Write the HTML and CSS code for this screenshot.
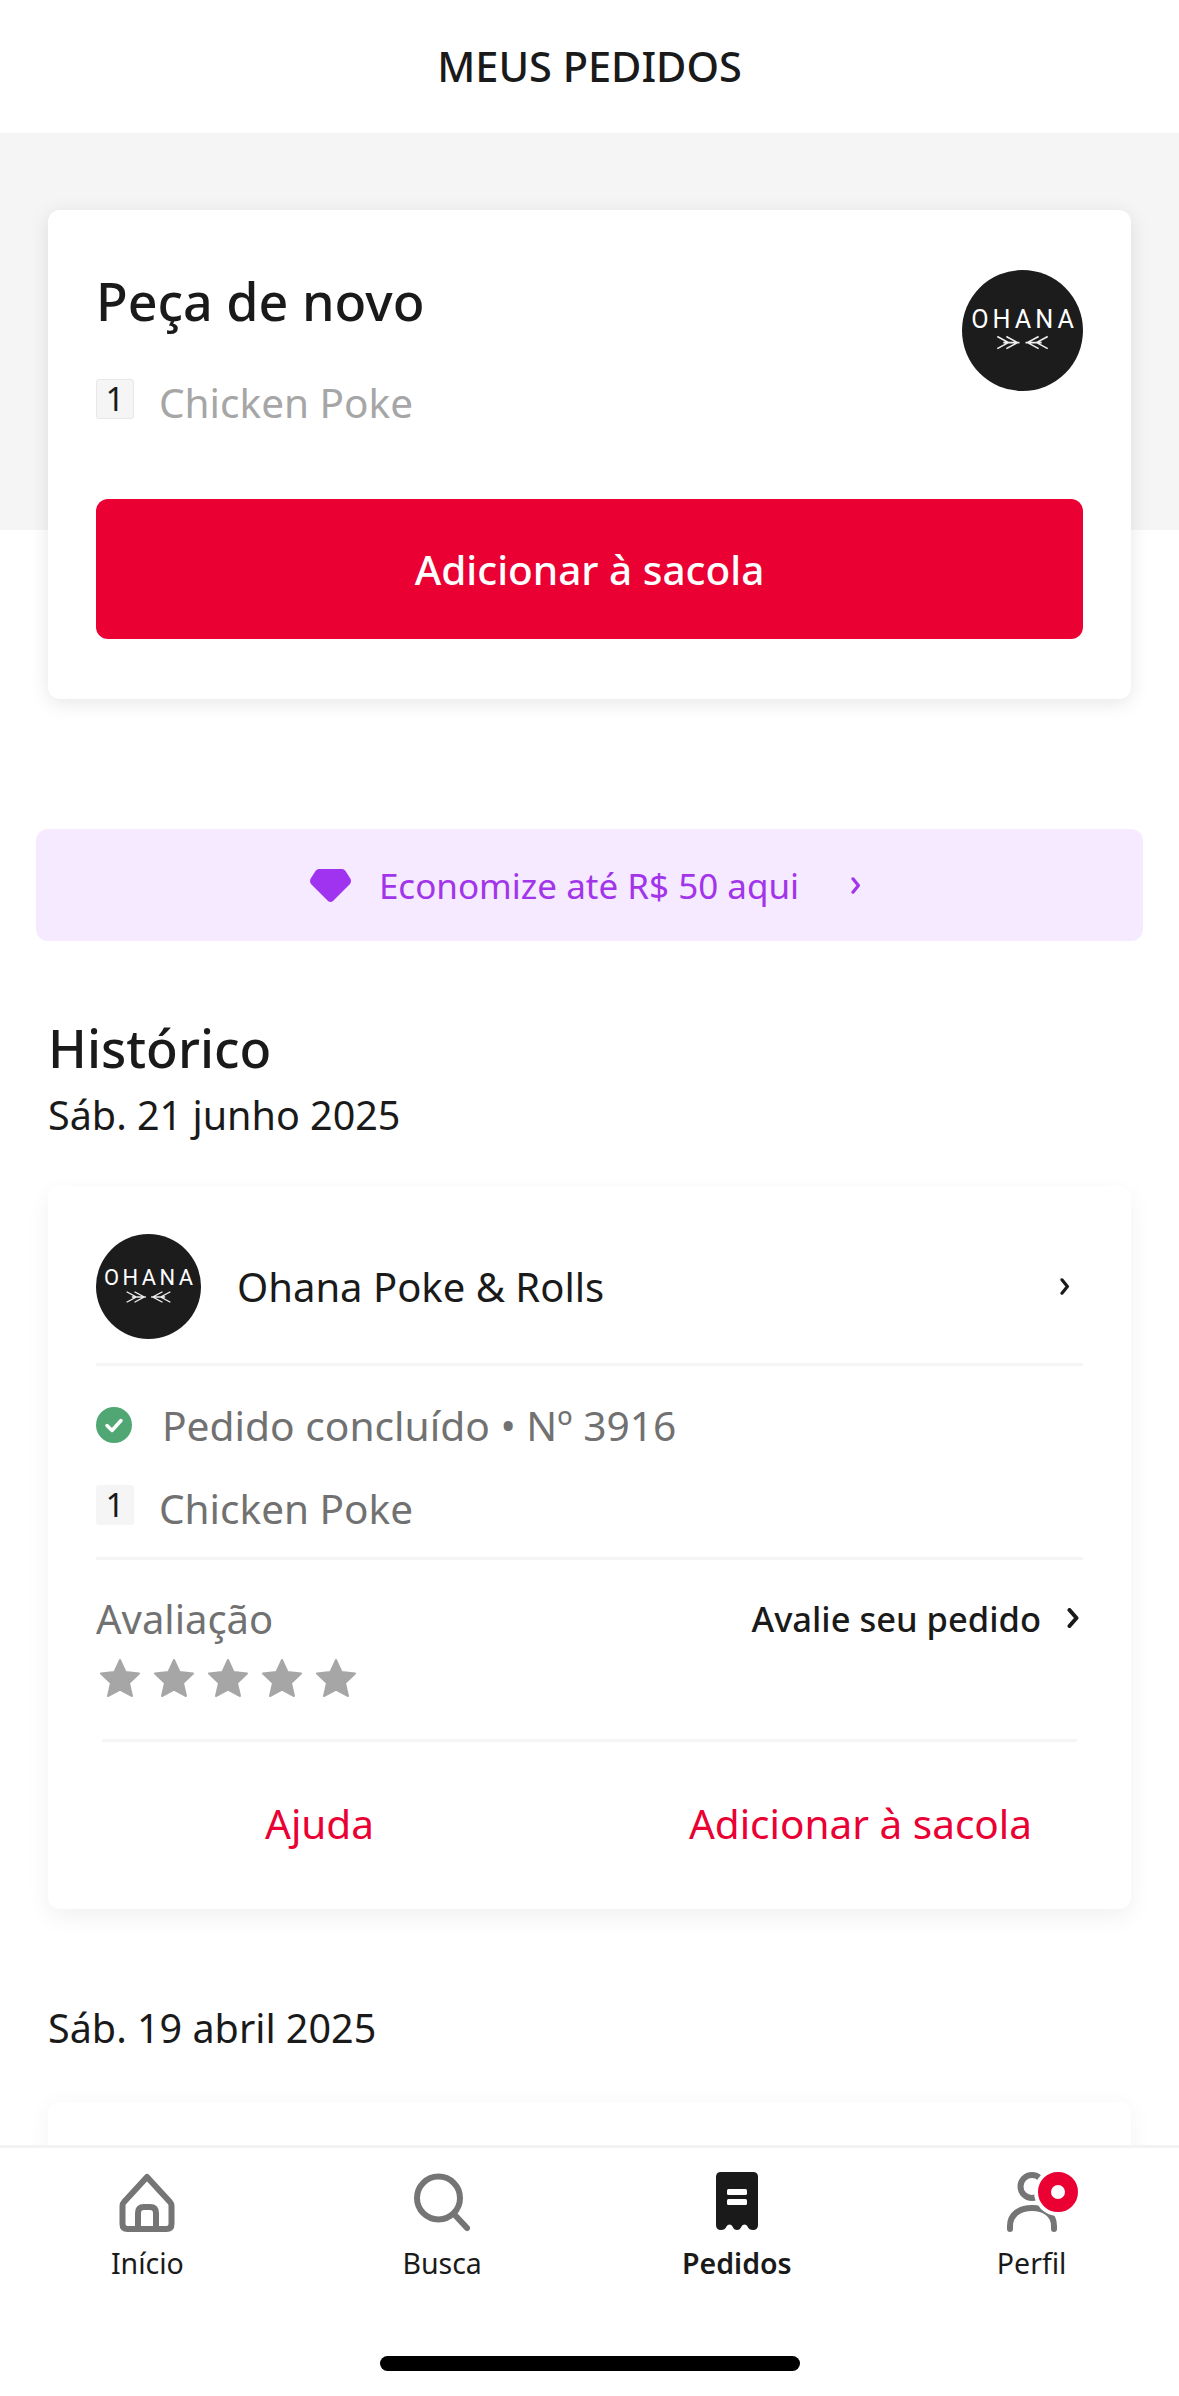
FILE: index.html
```html
<!DOCTYPE html>
<html lang="pt-BR">
<head>
    <meta charset="UTF-8">
    <meta name="viewport" content="width=device-width, initial-scale=1.0">
    <title>Meus pedidos</title>
    <link rel="stylesheet" href="styles.css">
</head>
<body>
<div class="screen">
    <header class="topbar">MEUS PEDIDOS</header>

    <main class="content">
        <section class="band">
            <div class="card again">
                <div class="again-top">
                    <div>
                        <h2 class="again-title">Peça de novo</h2>
                        <div class="item again-item"><span class="qty qty-line">1</span><span>Chicken Poke</span></div>
                    </div>
                    <svg class="logo logo-big" viewBox="0 0 120 120">
                        <circle cx="60" cy="60" r="60" fill="#1c1c1c"/>
                        <text class="logo-text" x="62" y="58" text-anchor="middle">OHANA</text>
                        <path class="logo-arrows" d="M35 66l11 6-11 6M44 66l11 6-11 6M41 72h16M85 66l-11 6 11 6M76 66l-11 6 11 6M79 72H63"/>
                    </svg>
                </div>
                <button class="btn-red">Adicionar à sacola</button>
            </div>
        </section>

        <a class="promo">
            <svg class="promo-gem" viewBox="0 0 41 33"><path d="M9 0h23q2 0 3.500 2L40 9q2 3 0 6L23 32q-2.500 1.800-5 0L1 15q-2-3 0-6L5.500 2Q7 0 9 0z"/></svg>
            <span>Economize até R$ 50 aqui</span>
            <svg class="chev chev-promo" viewBox="0 0 8 14"><path d="M1.500 1.500L6 7l-4.500 5.500"/></svg>
        </a>

        <section class="history">
            <h2 class="history-title">Histórico</h2>
            <div class="date">Sáb. 21 junho 2025</div>

            <article class="card order">
                <div class="order-head">
                    <svg class="logo logo-small" viewBox="0 0 120 120">
                        <circle cx="60" cy="60" r="60" fill="#1c1c1c"/>
                        <text class="logo-text" x="62" y="58" text-anchor="middle">OHANA</text>
                        <path class="logo-arrows" d="M35 66l11 6-11 6M44 66l11 6-11 6M41 72h16M85 66l-11 6 11 6M76 66l-11 6 11 6M79 72H63"/>
                    </svg>
                    <span class="order-name">Ohana Poke &amp; Rolls</span>
                    <svg class="chev chev-head" viewBox="0 0 8 14"><path d="M1.500 1.500L6 7l-4.500 5.500"/></svg>
                </div>

                <div class="order-info">
                    <div class="status">
                        <svg class="status-icon" viewBox="0 0 36 36"><circle cx="18" cy="18" r="18" fill="#50a773"/><path d="M11 18.500l5 5 9-10" fill="none" stroke="#fff" stroke-width="3.500" stroke-linecap="round" stroke-linejoin="round"/></svg>
                        <span>Pedido concluído • Nº 3916</span>
                    </div>
                    <div class="item order-item"><span class="qty">1</span><span>Chicken Poke</span></div>
                </div>

                <div class="rating">
                    <div class="rating-row">
                        <span class="rating-label">Avaliação</span>
                        <span class="rating-link">Avalie seu pedido
                            <svg class="chev chev-rate" viewBox="0 0 12 20"><path d="M2.500 2L9.500 10l-7 8"/></svg>
                        </span>
                    </div>
                    <div class="stars">
                        <svg class="star" viewBox="0 0 40 38"><path d="M20 1l5.500 12L39 14.500 29 24l3 13-12-6.500L8 37l3-13L1 14.500 14.500 13z"/></svg>
                        <svg class="star" viewBox="0 0 40 38"><path d="M20 1l5.500 12L39 14.500 29 24l3 13-12-6.500L8 37l3-13L1 14.500 14.500 13z"/></svg>
                        <svg class="star" viewBox="0 0 40 38"><path d="M20 1l5.500 12L39 14.500 29 24l3 13-12-6.500L8 37l3-13L1 14.500 14.500 13z"/></svg>
                        <svg class="star" viewBox="0 0 40 38"><path d="M20 1l5.500 12L39 14.500 29 24l3 13-12-6.500L8 37l3-13L1 14.500 14.500 13z"/></svg>
                        <svg class="star" viewBox="0 0 40 38"><path d="M20 1l5.500 12L39 14.500 29 24l3 13-12-6.500L8 37l3-13L1 14.500 14.500 13z"/></svg>
                    </div>
                </div>

                <div class="actions">
                    <a>Ajuda</a>
                    <a>Adicionar à sacola</a>
                </div>
            </article>

            <div class="date date-second">Sáb. 19 abril 2025</div>
            <article class="card order-next"></article>
        </section>
    </main>

    <nav class="tabbar">
        <div class="tabs">
            <a class="tab">
                <svg class="tab-icon" viewBox="0 0 72 60"><path class="ln" d="M36 5L13 30q-1.500 1.500-1.500 4v18q0 5 5 5h39q5 0 5-5V34q0-2.500-1.500-4z"/><path class="ln" d="M27 57V41q0-6 6-6h6q6 0 6 6v16"/></svg>
                <span>Início</span>
            </a>
            <a class="tab">
                <svg class="tab-icon" viewBox="0 0 72 60"><circle class="ln" cx="32.500" cy="26" r="21.500"/><path class="ln" d="M48 42l13 14"/></svg>
                <span>Busca</span>
            </a>
            <a class="tab tab-active">
                <svg class="tab-icon" viewBox="0 0 72 60"><path fill="#1a1a1a" d="M20 0H52Q57 0 57 5V53Q57 58 52 58Q48 58 46.500 54.500Q45.500 52.500 43.500 52.500Q41.500 52.500 40.500 54.500Q39 58 36 58Q33 58 31.500 54.500Q30.500 52.500 28.500 52.500Q26.500 52.500 25.500 54.500Q24 58 20 58Q15 58 15 53V5Q15 0 20 0Z"/><rect x="26" y="17" width="20" height="6" rx="1.500" fill="#fff"/><rect x="26" y="27" width="20" height="6" rx="1.500" fill="#fff"/></svg>
                <span>Pedidos</span>
            </a>
            <a class="tab">
                <svg class="tab-icon" viewBox="0 0 72 60"><circle class="ln" cx="36" cy="14.500" r="11.500"/><path class="ln" d="M14 57v-3c0-12 10-18 22-18s22 6 22 18v3"/><circle cx="62" cy="20" r="24" fill="#fff"/><circle cx="62" cy="20" r="13.500" fill="none" stroke="#ea0033" stroke-width="13"/></svg>
                <span>Perfil</span>
            </a>
        </div>
        <div class="home-bar"></div>
    </nav>
</div>
</body>
</html>
```

FILE: styles.css
```css
*{
    box-sizing:border-box;
}

body{
    margin:0;
    background:#fff;
    color:#1a1a1a;
    font-family:"Noto Sans", "Open Sans", sans-serif;
}

h2{
    margin:0;
}

.screen{
    width:1179px;
    height:2396px;
    display:flex;
    flex-direction:column;
    overflow:hidden;
}

.topbar{
    height:131px;
    margin-bottom:2px;
    flex:none;
    display:flex;
    align-items:center;
    justify-content:center;
    font-size:41.500px;
    font-weight:500;
}

.content{
    flex:1;
    min-height:0;
    overflow:hidden;
}

/* gray strip, the first card hangs out below it */
.band{
    height:397px;
    padding:77px 48px 0;
    background:#f5f5f5;
}

.card{
    background:#fff;
    border-radius:12px;
    box-shadow:0 4px 20px rgba(0,0,0,.1);
}

.again{
    height:489px;
    padding:60px 48px;
}

.again-top{
    height:229px;
    display:flex;
    justify-content:space-between;
    align-items:flex-start;
}

.again-title{
    font-size:52px;
    font-weight:500;
    line-height:62px;
}

.logo{
    display:block;
    flex:none;
}

.logo-big{
    width:121px;
    height:121px;
}

.logo-small{
    width:105px;
    height:105px;
}

.logo-text{
    fill:#fff;
    font-family:Roboto, sans-serif;
    font-size:25px;
    letter-spacing:4px;
}

.logo-arrows{
    fill:none;
    stroke:#eee;
    stroke-width:1.6;
}

.item{
    display:flex;
    align-items:flex-start;
    gap:25px;
    font-size:40.500px;
    line-height:48px;
}

.again-item{
    margin-top:47px;
    color:#a6a6a6;
}

.order-item{
    margin-top:41px;
    color:#717171;
}

.qty{
    width:38px;
    height:40px;
    flex:none;
    display:flex;
    align-items:center;
    justify-content:center;
    background:#f5f5f5;
    border-radius:3px;
    color:#1a1a1a;
    font-size:33px;
    line-height:40px;
}

.qty-line{
    border:1px solid #e8e8e8;
}

.btn-red{
    display:block;
    width:100%;
    height:140px;
    border:none;
    border-radius:12px;
    background:#ea0033;
    color:#fff;
    font-family:inherit;
    font-size:40.500px;
    font-weight:500;
}

.promo{
    height:112px;
    margin:299px 36px 0;
    padding-right:8px;
    display:flex;
    align-items:center;
    justify-content:center;
    gap:28px;
    background:#f5eaff;
    border-radius:12px;
    color:#a235ea;
    font-size:35px;
}

.promo-gem{
    width:41px;
    height:33px;
    fill:#a033f0;
}

.chev{
    fill:none;
    stroke-linecap:round;
    stroke-linejoin:round;
}

.chev-promo{
    width:10px;
    height:17px;
    margin-left:24px;
    stroke:#a235ea;
    stroke-width:2.6;
}

.history{
    padding:77px 48px 0;
}

.history-title{
    font-size:52px;
    font-weight:500;
    line-height:60px;
}

.date{
    margin-top:12px;
    font-size:39.500px;
    line-height:50px;
}

.date-second{
    margin-top:94px;
}

.order{
    margin-top:46px;
    height:723px;
    padding:49px 48px 0;
    box-shadow:0 8px 24px rgba(0,0,0,.06);
}

.order-head{
    display:flex;
    align-items:center;
    height:131px;
    padding-bottom:25px;
    border-bottom:3px solid #f5f5f5;
}

.order-name{
    margin-left:36px;
    font-size:40px;
}

.chev-head{
    width:10px;
    height:17px;
    margin-left:auto;
    margin-right:13px;
    stroke:#1a1a1a;
    stroke-width:2.6;
}

.order-info{
    padding:40px 0 24px;
    border-bottom:3px solid #f5f5f5;
}

.status{
    display:flex;
    align-items:center;
    gap:30px;
    height:38px;
    color:#717171;
    font-size:40.700px;
}

.status-icon{
    width:36px;
    height:36px;
}

.rating{
    padding:36px 0 42px;
}

.rating-row{
    display:flex;
    justify-content:space-between;
    align-items:center;
    height:44px;
}

.rating-label{
    color:#717171;
    font-size:40px;
}

.rating-link{
    display:flex;
    align-items:center;
    gap:26px;
    padding-right:4px;
    font-size:34.500px;
    font-weight:500;
}

.chev-rate{
    width:12px;
    height:20px;
    stroke:#1a1a1a;
    stroke-width:4;
}

.stars{
    display:flex;
    gap:14px;
    margin-top:19px;
    padding-left:4px;
}

.star{
    width:40px;
    height:38px;
    fill:#a6a6a6;
    stroke:#a6a6a6;
    stroke-width:2;
    stroke-linejoin:round;
}

.actions{
    display:flex;
    justify-content:space-between;
    align-items:center;
    height:169px;
    margin:0 6px;
    padding:0 45px 3px 163px;
    border-top:3px solid #f5f5f5;
    color:#ea0033;
    font-size:40.500px;
}

.order-next{
    height:400px;
    margin-top:49px;
    box-shadow:0 4px 24px rgba(0,0,0,.05);
}

.tabbar{
    height:251px;
    flex:none;
    background:#fff;
    border-top:3px solid #f3f3f3;
}

.tabs{
    display:grid;
    grid-template-columns:repeat(4, 1fr);
    padding-top:24px;
}

.tab{
    display:flex;
    flex-direction:column;
    align-items:center;
    font-size:28.500px;
    line-height:40px;
}

.tab-icon{
    width:72px;
    height:60px;
    margin-bottom:11px;
    overflow:visible;
}

.tab-active{
    font-weight:600;
}

.ln{
    fill:none;
    stroke:#757575;
    stroke-width:6;
    stroke-linejoin:round;
    stroke-linecap:round;
}

.home-bar{
    width:420px;
    height:15px;
    margin:73px auto 0;
    background:#000;
    border-radius:8px;
}
```
